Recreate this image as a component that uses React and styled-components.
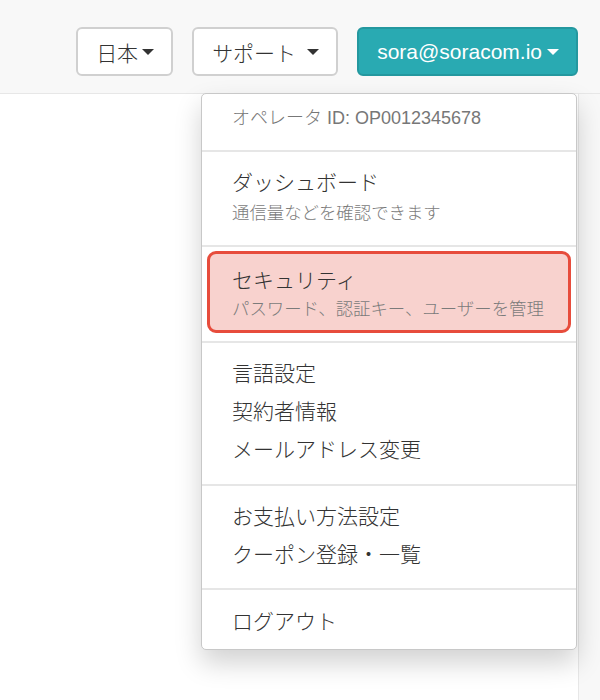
import React from 'react';
import styled, { createGlobalStyle } from 'styled-components';

const GlobalStyle = createGlobalStyle`
    html, body {
        margin: 0;
        padding: 0;
        background: #ffffff;
    }
    body {
        font-family: "Liberation Sans", "Noto Sans CJK JP", sans-serif;
        color: #333333;
    }
`;

const menuSections = [
    { kind: 'header', text: 'オペレータ ID: OP0012345678' },
    {
        kind: 'described',
        title: 'ダッシュボード',
        note: '通信量などを確認できます'
    },
    {
        kind: 'highlight',
        title: 'セキュリティ',
        note: 'パスワード、認証キー、ユーザーを管理'
    },
    { kind: 'list', items: ['言語設定', '契約者情報', 'メールアドレス変更'], pad: '12px 0 15px' },
    { kind: 'list', items: ['お支払い方法設定', 'クーポン登録・一覧'], pad: '12px 0 14px' },
    { kind: 'list', items: ['ログアウト'], pad: '13px 0 8px' }
];

export default function App() {
    return (
        <Page>
            <GlobalStyle />
            <TopBar>
                <NavButton>
                    日本<Caret gap={4} />
                </NavButton>
                <NavButton>
                    サポート<Caret gap={11} />
                </NavButton>
                <UserMenu>
                    <NavButton primary>
                        sora@soracom.io<Caret gap={5} light />
                    </NavButton>
                    <Dropdown>
                        {menuSections.map((section, i) => (
                            <React.Fragment key={i}>
                                {i > 0 && <Divider />}
                                {renderSection(section)}
                            </React.Fragment>
                        ))}
                    </Dropdown>
                </UserMenu>
            </TopBar>
            <Body>
                <Content />
                <SideStrip />
            </Body>
        </Page>
    );
}

function renderSection(section) {
    if (section.kind === 'header') {
        return (
            <Section pad="5px 0 13px">
                <MenuHeader>{section.text}</MenuHeader>
            </Section>
        );
    }
    if (section.kind === 'described') {
        return (
            <Section pad="16px 0 17px">
                <MenuItem tall={30}>{section.title}</MenuItem>
                <MenuNote>{section.note}</MenuNote>
            </Section>
        );
    }
    if (section.kind === 'highlight') {
        return (
            <Section pad="4px 5px 8px">
                <ActiveBox>
                    <MenuItem tall={28} flush>
                        {section.title}
                    </MenuItem>
                    <MenuNote tall={28}>{section.note}</MenuNote>
                </ActiveBox>
            </Section>
        );
    }
    return (
        <Section pad={section.pad}>
            {section.items.map(item => (
                <MenuItem key={item}>{item}</MenuItem>
            ))}
        </Section>
    );
}

const Page = styled.div`
    display: flex;
    flex-direction: column;
    width: 600px;
    height: 700px;
    overflow: hidden;
`;

const TopBar = styled.div`
    display: flex;
    justify-content: flex-end;
    align-items: flex-start;
    gap: 19px;
    height: 94px;
    box-sizing: border-box;
    padding: 27px 22px 0 0;
    background-color: #f8f8f8;
    border-bottom: 1px solid #e7e7e7;
    position: relative;
    z-index: 2;
`;

const NavButton = styled.button`
    display: flex;
    align-items: center;
    height: 49px;
    box-sizing: border-box;
    padding: 0 17px 0 18px;
    font-family: "Liberation Sans", "Noto Sans CJK JP", sans-serif;
    font-weight: 300;
    font-size: 21px;
    color: ${props => (props.primary ? '#ffffff' : '#333333')};
    background-color: ${props => (props.primary ? '#29aab2' : '#ffffff')};
    border: 2px solid ${props => (props.primary ? '#24989f' : '#d0d0d0')};
    border-radius: 6px;
    cursor: pointer;
`;

const Caret = styled.span`
    display: inline-block;
    width: 0;
    height: 0;
    margin-left: ${props => props.gap}px;
    border-top: 6px solid ${props => (props.light ? '#ffffff' : '#333333')};
    border-left: 6px solid transparent;
    border-right: 6px solid transparent;
`;

const UserMenu = styled.div`
    position: relative;
`;

const Dropdown = styled.div`
    position: absolute;
    top: 66px;
    right: 1px;
    width: 376px;
    box-sizing: border-box;
    background-color: #ffffff;
    border: 1px solid #c8c8c8;
    border-radius: 5px;
    box-shadow: 0 13px 27px rgba(0, 0, 0, 0.18);
    font-weight: 300;
`;

const Section = styled.div`
    padding: ${props => props.pad};
`;

const Divider = styled.div`
    height: 2px;
    background-color: #e6e6e6;
`;

const MenuHeader = styled.div`
    padding: 0 30px;
    line-height: 38px;
    font-size: 18px;
    color: #777777;
    white-space: nowrap;
`;

const MenuItem = styled.div`
    padding: 0 ${props => (props.flush ? '0' : '30px')};
    line-height: ${props => props.tall || 38}px;
    font-size: 21px;
    color: #333333;
    white-space: nowrap;
`;

const MenuNote = styled.div`
    padding: 0 ${props => (props.tall ? '0' : '30px')};
    line-height: ${props => props.tall || 30}px;
    font-size: 17.4px;
    color: #7b7b7b;
    white-space: nowrap;
`;

const ActiveBox = styled.div`
    padding: 13px 0 7px 22px;
    background-color: #f8d2ce;
    border: 3px solid #e74c3c;
    border-radius: 9px;
`;

const Body = styled.div`
    display: flex;
    flex: 1;
`;

const Content = styled.div`
    flex: 1;
    background-color: #ffffff;
`;

const SideStrip = styled.div`
    width: 21px;
    background-color: #f8f8f8;
    border-left: 1px solid #e7e7e7;
`;
